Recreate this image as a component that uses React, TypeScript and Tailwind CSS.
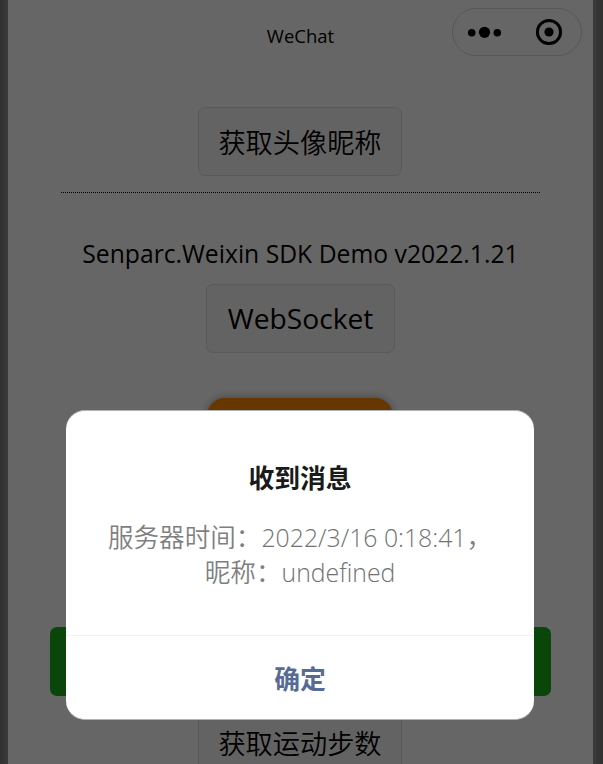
import type { ReactNode } from 'react';

const latin = "font-['Open_Sans','Noto_Sans_CJK_SC',sans-serif]";
const cjk = "font-['Noto_Sans_CJK_SC',sans-serif]";

function DefaultButton({ className, children }: { className: string; children: ReactNode }) {
  return (
    <button
      className={`flex h-[69px] shrink-0 items-center justify-center rounded-[7px] border border-[#e0e0e0] bg-[#f8f8f8] whitespace-nowrap text-black ${className}`}
    >
      {children}
    </button>
  );
}

function Capsule() {
  return (
    <div className="flex h-12 w-[130px] items-center rounded-full border border-[#dadada]">
      <svg width="128" height="46" viewBox="453 9 128 46" className="block">
        <circle cx="471.7" cy="32.7" r="3.8" />
        <circle cx="484.5" cy="32.3" r="5.6" />
        <circle cx="497.3" cy="32.7" r="3.8" />
        <circle cx="549" cy="32" r="11.6" fill="none" stroke="#000" strokeWidth="3" />
        <circle cx="549" cy="32" r="4.6" />
      </svg>
    </div>
  );
}

function Modal() {
  return (
    <div role="dialog" className="mt-[410px] mr-px flex h-[310px] w-[468px] flex-col rounded-[19px] border-y border-[#b3b3b3] bg-white bg-clip-border text-center">
      <h2 className={`mt-[46px] h-[40px] text-[25.8px] leading-[40px] font-bold text-[#1a1a1a] ${cjk}`}>收到消息</h2>
      <div className={`mt-[21px] flex flex-col text-[25.6px] leading-[35px] font-[350] whitespace-nowrap text-[#7f7f7f] ${cjk}`}>
        <p className="h-[35px]">
          服务器时间：<span className={`text-[24.8px] font-light text-[#727272] ${latin}`}>2022/3/16 0:18:41</span>，
        </p>
        <p className="h-[35px]">
          昵称：<span className={`text-[24.8px] font-light text-[#727272] ${latin}`}>undefined</span>
        </p>
      </div>
      <button className={`mt-auto h-[84px] border-t border-[#f2f2f2] pt-px text-[25.8px] font-bold text-[#576b95] ${cjk}`}>
        确定
      </button>
    </div>
  );
}

export default function App() {
  return (
    <div className="relative flex h-[764px] w-[603px] overflow-hidden">
      <div className="w-2 bg-gradient-to-r from-[#313131] to-[#3b3b3b]" />
      <div className="relative flex w-[585px] flex-col bg-white">
        <header className="grid h-[64px] shrink-0 grid-cols-[1fr_auto_1fr] items-start">
          <span />
          <span className={`mt-[22px] text-[18.5px] leading-[28px] ${latin}`}>WeChat</span>
          <div className="mt-2 mr-[11px] flex justify-end">
            <Capsule />
          </div>
        </header>
        <main className="flex flex-col items-center pt-[43px]">
          <DefaultButton className={`mr-px w-[204px] text-[27.2px] font-[350] ${cjk}`}>获取头像昵称</DefaultButton>
          <div className="mt-[16px] w-[479px] border-t border-dotted border-black" />
          <p className={`mt-[43px] h-[36px] text-[24.7px] leading-[36px] whitespace-nowrap ${latin}`}>
            Senparc.Weixin SDK Demo v2022.1.21
          </p>
          <DefaultButton className={`mt-[12px] w-[189px] text-[28.2px] ${latin}`}>WebSocket</DefaultButton>
          <div className="mt-[45px] mr-px h-[68px] w-[186px] shrink-0 rounded-[18px] bg-[#ff8c00] shadow-[0_0_8px_rgba(0,0,0,0.35)]" />
          <div className="mt-[161px] h-[69px] w-[501px] shrink-0 rounded-[7px] bg-[#1aad19]" />
          <DefaultButton className={`mt-[12px] mr-px w-[204px] text-[27.2px] font-[350] ${cjk}`}>获取运动步数</DefaultButton>
        </main>
        <div className="absolute inset-0 flex items-start justify-center bg-black/60">
          <Modal />
        </div>
      </div>
      <div className="w-[10px] bg-gradient-to-r from-[#3b3b3b] to-[#303030]" />
    </div>
  );
}
